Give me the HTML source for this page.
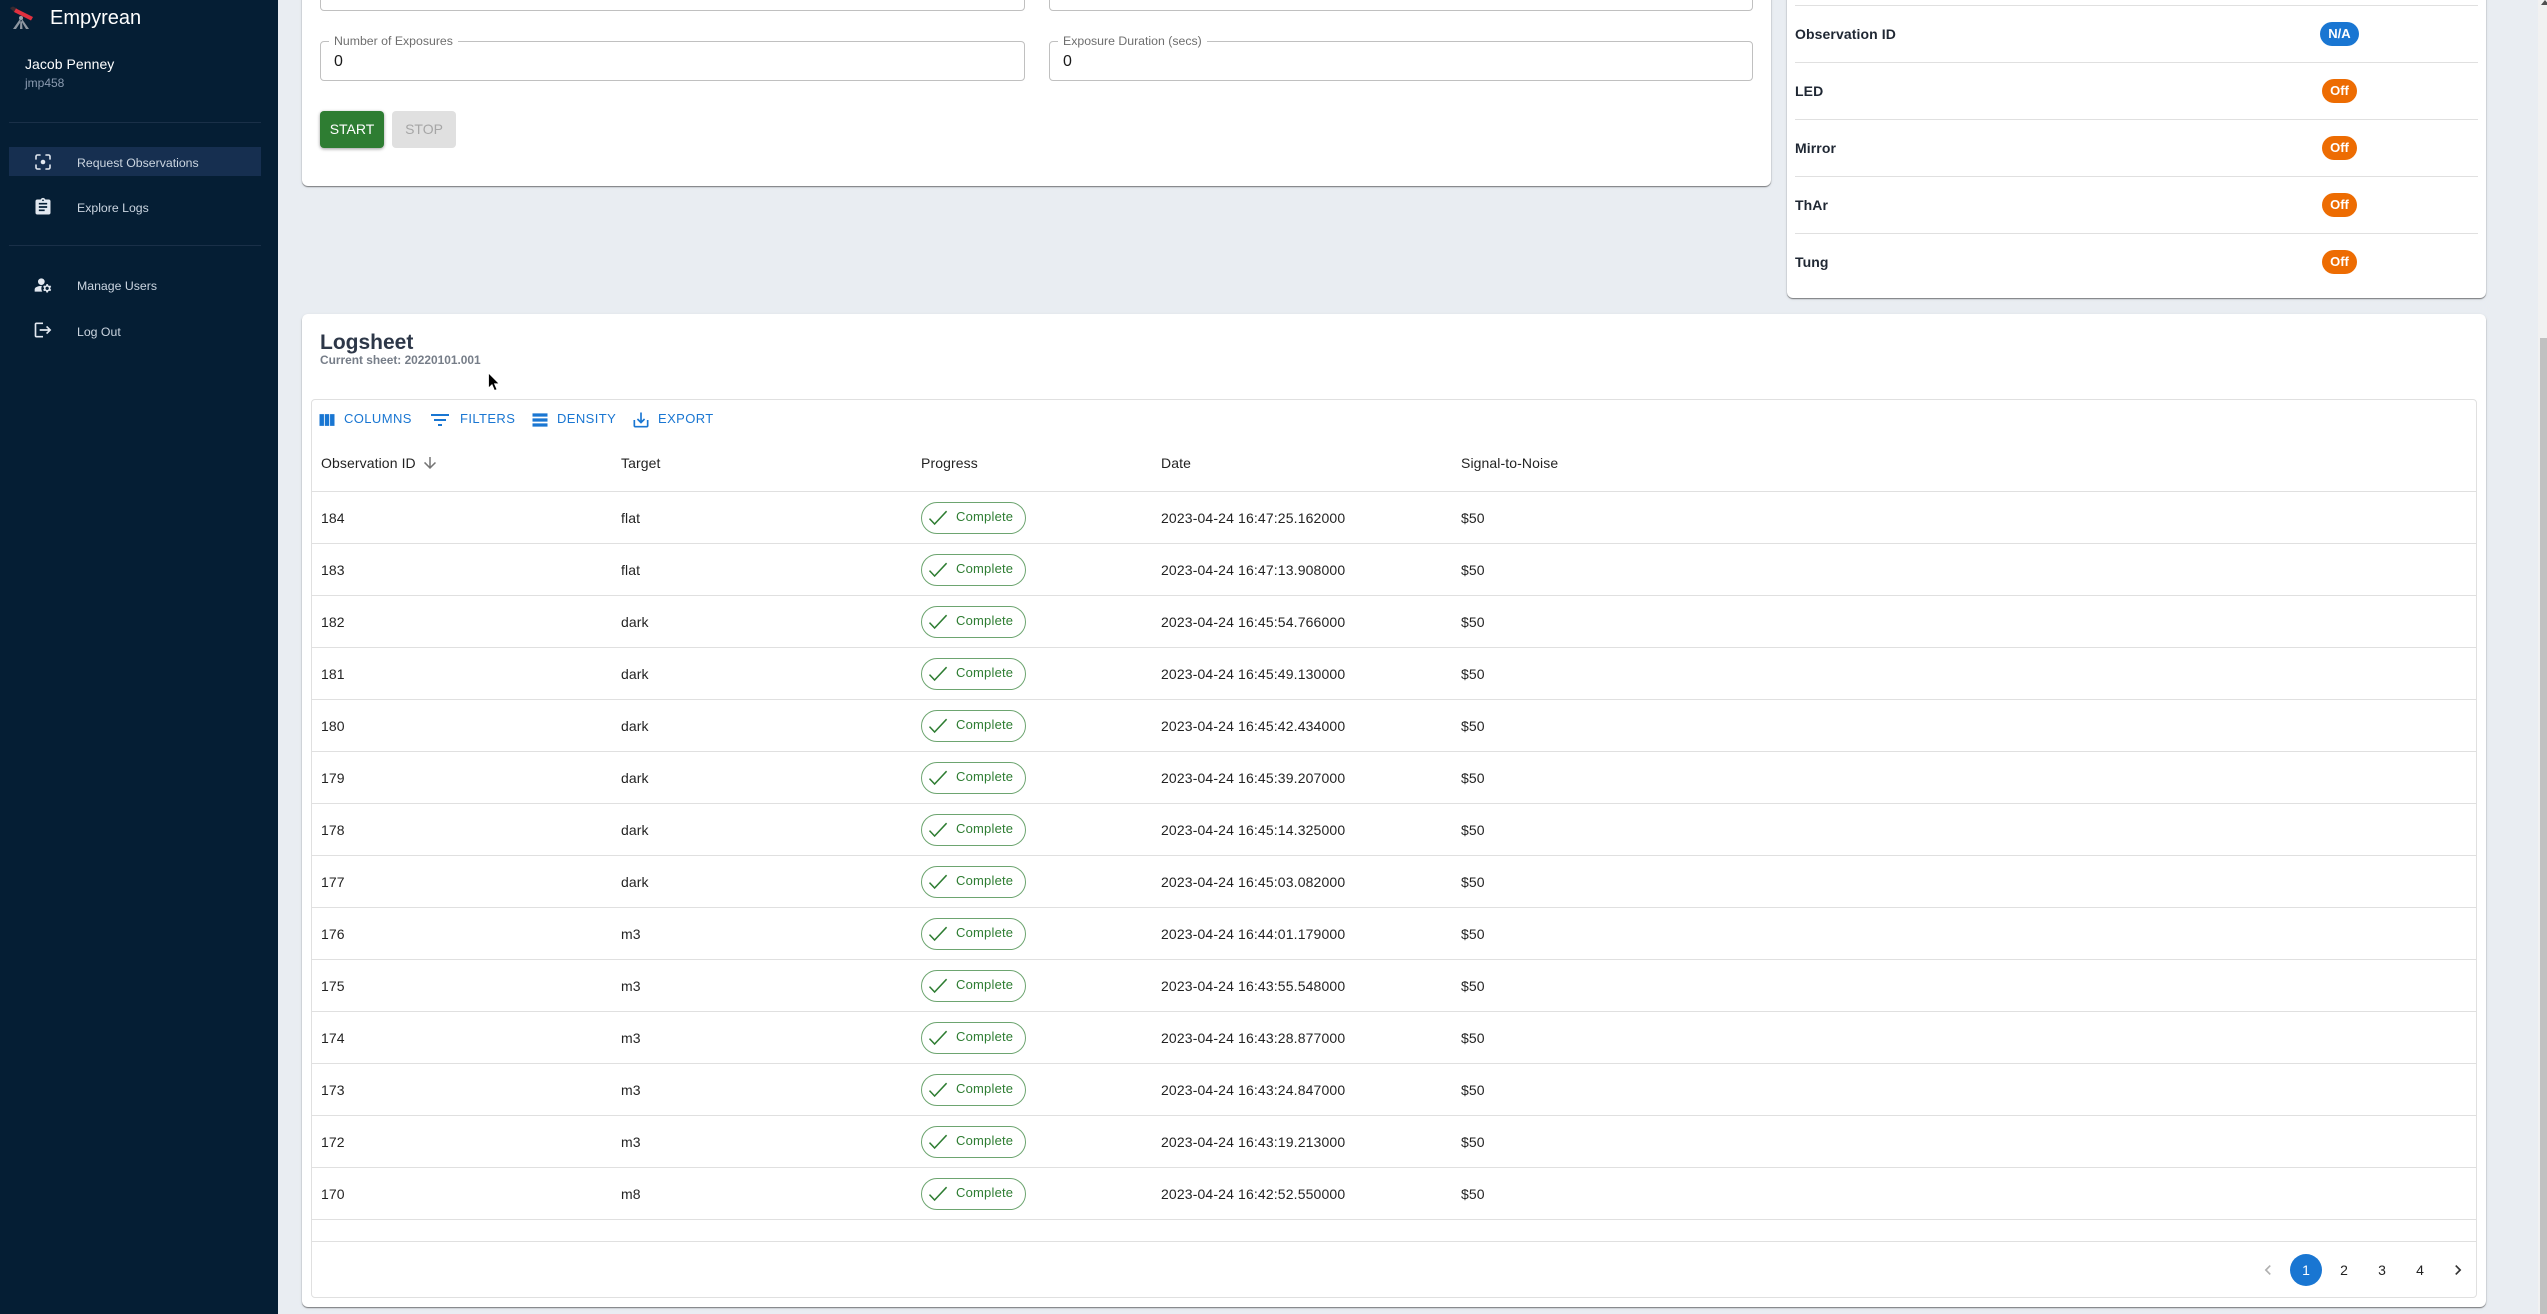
<!DOCTYPE html>
<html lang="en">
<head>
<meta charset="utf-8">
<title>Empyrean</title>
<style>
*{box-sizing:border-box}
html,body{margin:0;padding:0;width:2547px;height:1314px;overflow:hidden;background:#e9edf2;font-family:"Liberation Sans",sans-serif;color:rgba(0,0,0,.87)}
.a{position:absolute;white-space:nowrap}
svg{display:block}
#side{position:absolute;left:0;top:0;width:278px;height:1314px;background:#051e34}
.nav{position:absolute;left:77px;font-size:12.3px;line-height:20px;color:#cbd5e0}
.div{position:absolute;left:9px;width:252px;height:1px;background:#1a3048}
.card{position:absolute;background:#fff;border-radius:6px;box-shadow:0 1px 1px rgba(0,0,0,.45),0 1px 3px rgba(0,0,0,.1)}
.inp{position:absolute;border:1px solid #c0c0c0;border-radius:4px;background:#fff}
.lab{position:absolute;font-size:12.3px;line-height:16px;color:#6e6e6e;background:#fff;padding:0 5.5px}
.val{position:absolute;font-size:16px;line-height:20px;color:#1a1a1a}
.rl{position:absolute;left:1795px;width:683px;height:1px;background:#e0e0e0}
.rt{position:absolute;left:1795px;font-size:14px;font-weight:700;line-height:20px;letter-spacing:.1px;color:#1f2733}
.cp{position:absolute;height:24px;border-radius:12px;color:#fff;font-size:13px;font-weight:700;line-height:24px;text-align:center}
.off{left:2322px;width:35px;background:#ed6c02}
.tb{position:absolute;top:409px;font-size:13px;line-height:20px;letter-spacing:.4px;color:#1976d2}
.th{position:absolute;top:453px;font-size:14px;line-height:20px;letter-spacing:.1px}
.row{position:absolute;left:312px;width:2164px;height:52px;border-bottom:1px solid #e0e0e0;font-size:14px;line-height:53px;letter-spacing:.1px}
.row span{position:absolute;top:0}
.c1{left:9px}.c2{left:309px}.c4{left:849px;letter-spacing:.14px}.c5{left:1149px}
.chip{position:absolute;left:609px;top:10px;width:105px;height:32px;border:1px solid #6da570;border-radius:16px;background:#fff;line-height:16px}
.chip b{position:absolute;left:34px;top:6px;font-weight:400;font-size:13px;line-height:16px;letter-spacing:.2px;color:#2e7d32}
.chip svg{position:absolute;left:6px;top:7px}
.pg{position:absolute;top:1254px;width:32px;height:32px;font-size:14px;line-height:32px;text-align:center}
</style>
</head>
<body>
<svg width="0" height="0" style="position:absolute"><defs>
<symbol id="ck" viewBox="0 0 20 16"><path d="M1.5 8.6 6.6 14 18.6 1.2" fill="none" stroke="#2e7d32" stroke-width="1.5"/></symbol>
</defs></svg>

<div id="side">
  <svg class="a" style="left:8px;top:4px" width="28" height="27" viewBox="0 0 28 27">
    <path d="M2 4 L5 2.500 L9 4.500 L6 8Z" fill="#3a2a30"/>
    <path d="M8 4.500 L25 13 L23 16.500 L6 8Z" fill="#e0303f"/>
    <circle cx="13" cy="14" r="2" fill="#9aa3ad"/>
    <path d="M12 15 L5 25 L8 25 L13 17.500Z M12.300 17.500 H14 L14.500 25 H12Z M14 15 L21 25 L18 25 L13.500 17.500Z" fill="#8d96a0"/>
  </svg>
  <div class="a" style="left:50px;top:6px;font-size:20px;line-height:24px;color:#fff">Empyrean</div>
  <div class="a" style="left:25px;top:54px;font-size:14px;line-height:20px;letter-spacing:.05px;color:#fff">Jacob Penney</div>
  <div class="a" style="left:25px;top:75px;font-size:12px;line-height:16px;color:#8b9bb0">jmp458</div>
  <div class="div" style="top:122px"></div>
  <div class="a" style="left:9px;top:147px;width:252px;height:29px;background:#162f50"></div>
  <svg class="a" style="left:35px;top:154px" width="16" height="16" viewBox="0 0 16 16" fill="none" stroke="#e2e8f0" stroke-width="1.6" stroke-linecap="round">
    <path d="M1 5V2.500A1.500 1.500 0 0 1 2.500 1H5M11 1h2.500A1.500 1.500 0 0 1 15 2.500V5M15 11v2.500a1.500 1.500 0 0 1-1.500 1.500H11M5 15H2.500A1.500 1.500 0 0 1 1 13.500V11"/>
    <circle cx="8" cy="8" r="2.300" fill="#e2e8f0" stroke="none"/>
  </svg>
  <div class="nav" style="top:153px">Request Observations</div>
  <svg class="a" style="left:33px;top:197px" width="20" height="20" viewBox="0 0 24 24" fill="#e2e8f0"><path d="M19 3h-4.180C14.400 1.840 13.300 1 12 1c-1.300 0-2.400.84-2.820 2H5c-1.100 0-2 .9-2 2v14c0 1.100.9 2 2 2h14c1.100 0 2-.9 2-2V5c0-1.100-.9-2-2-2zm-7 0c.55 0 1 .45 1 1s-.45 1-1 1-1-.45-1-1 .45-1 1-1zm2 14H7v-2h7v2zm3-4H7v-2h10v2zm0-4H7V7h10v2z"/></svg>
  <div class="nav" style="top:198px">Explore Logs</div>
  <div class="div" style="top:245px"></div>
  <svg class="a" style="left:33px;top:275px" width="20" height="20" viewBox="0 0 24 24" fill="#e2e8f0"><circle cx="10" cy="8" r="4"/><path d="M10.670 13.020c-.22-.01-.44-.02-.67-.02-2.420 0-4.680.67-6.610 1.820-.88.52-1.390 1.500-1.390 2.530V20h9.260c-.79-1.130-1.260-2.510-1.260-4 0-1.070.25-2.070.67-2.980z"/><path d="M20.750 16c0-.22-.03-.42-.06-.63l1.140-1.010-1-1.730-1.450.49c-.32-.27-.68-.48-1.080-.63L18 11h-2l-.3 1.490c-.4.15-.76.36-1.080.63l-1.450-.49-1 1.730 1.140 1.010c-.03.21-.06.41-.06.63s.03.42.06.63l-1.140 1.010 1 1.730 1.450-.49c.32.27.68.48 1.080.63L16 21h2l.3-1.490c.4-.15.76-.36 1.080-.63l1.450.49 1-1.730-1.140-1.010c.03-.21.06-.41.06-.63zM17 18c-1.100 0-2-.9-2-2s.9-2 2-2 2 .9 2 2-.9 2-2 2z"/></svg>
  <div class="nav" style="top:276px">Manage Users</div>
  <svg class="a" style="left:33px;top:320px" width="20" height="20" viewBox="0 0 24 24" fill="#e2e8f0"><path d="M17 7l-1.410 1.410L18.170 11H8v2h10.170l-2.580 2.580L17 17l5-5zM4 5h8V3H4c-1.100 0-2 .9-2 2v14c0 1.100.9 2 2 2h8v-2H4V5z"/></svg>
  <div class="nav" style="top:322px">Log Out</div>
</div>

<div class="a" style="left:2538px;top:0;width:9px;height:1314px;background:#f1f1f1"></div>
<div class="a" style="left:2540px;top:338px;width:7px;height:976px;background:#c1c1c1"></div>
<svg class="a" style="left:2541px;top:0" width="6" height="5" viewBox="0 0 6 5"><path d="M4 0 L8 5 H0Z" fill="#505050"/></svg>

<div class="card" style="left:302px;top:-40px;width:1469px;height:226px"></div>
<div class="inp" style="left:320px;top:-30px;width:705px;height:41px"></div>
<div class="inp" style="left:1049px;top:-30px;width:704px;height:41px"></div>
<div class="inp" style="left:320px;top:41px;width:705px;height:40px"></div>
<div class="inp" style="left:1049px;top:41px;width:704px;height:40px"></div>
<div class="lab" style="left:328.500px;top:33px">Number of Exposures</div>
<div class="lab" style="left:1057.500px;top:33px">Exposure Duration (secs)</div>
<div class="val" style="left:334px;top:52px">0</div>
<div class="val" style="left:1063px;top:52px">0</div>
<div class="a" style="left:320px;top:111px;width:64px;height:37px;background:#2e7d32;border-radius:4px;color:#fff;font-size:14px;line-height:36px;text-align:center;box-shadow:0 1px 3px rgba(0,0,0,.4)">START</div>
<div class="a" style="left:392px;top:111px;width:64px;height:37px;background:#e0e0e0;border-radius:4px;color:#a6a6a6;font-size:14px;line-height:36px;text-align:center">STOP</div>

<div class="card" style="left:1787px;top:-40px;width:699px;height:338px"></div>
<div class="rl" style="top:5px"></div>
<div class="rl" style="top:62px"></div>
<div class="rl" style="top:119px"></div>
<div class="rl" style="top:176px"></div>
<div class="rl" style="top:233px"></div>
<div class="rt" style="top:24px">Observation ID</div>
<div class="rt" style="top:81px">LED</div>
<div class="rt" style="top:138px">Mirror</div>
<div class="rt" style="top:195px">ThAr</div>
<div class="rt" style="top:252px">Tung</div>
<div class="cp" style="left:2320px;top:22px;width:39px;background:#1976d2">N/A</div>
<div class="cp off" style="top:79px">Off</div>
<div class="cp off" style="top:136px">Off</div>
<div class="cp off" style="top:193px">Off</div>
<div class="cp off" style="top:250px">Off</div>

<div class="card" style="left:302px;top:314px;width:2184px;height:993px"></div>
<div class="a" style="left:320px;top:331px;font-size:21px;font-weight:700;line-height:24px;color:#2d3748">Logsheet</div>
<div class="a" style="left:320px;top:352px;font-size:11.9px;font-weight:700;line-height:16px;color:#767d88">Current sheet: 20220101.001</div>
<div class="a" style="left:311px;top:399px;width:2166px;height:899px;border:1px solid #e0e0e0;border-radius:4px"></div>

<svg class="a" style="left:317px;top:410px" width="20" height="20" viewBox="0 0 24 24" fill="#1976d2"><path d="M14.670 5v14H9.330V5h5.340zm1 14H21V5h-5.330v14zm-7.340 0V5H3v14h5.330z"/></svg>
<div class="tb" style="left:344px">COLUMNS</div>
<svg class="a" style="left:428px;top:408px" width="24" height="24" viewBox="0 0 24 24" fill="#1976d2"><path d="M10 18h4v-2h-4v2zM3 6v2h18V6H3zm3 7h12v-2H6v2z"/></svg>
<div class="tb" style="left:460px">FILTERS</div>
<svg class="a" style="left:530px;top:410px" width="20" height="20" viewBox="0 0 24 24" fill="#1976d2"><path d="M21 8H3V4h18V8zM21 10H3v4h18V10zM21 16H3v4h18V16z"/></svg>
<div class="tb" style="left:557px">DENSITY</div>
<svg class="a" style="left:631px;top:410px" width="20" height="20" viewBox="0 0 24 24" fill="#1976d2"><path d="M19 12v7H5v-7H3v7c0 1.100.9 2 2 2h14c1.100 0 2-.9 2-2v-7h-2zm-6 .67l2.590-2.580L17 11.500l-5 5-5-5 1.410-1.410L11 12.670V3h2z"/></svg>
<div class="tb" style="left:658px">EXPORT</div>

<div class="th" style="left:321px">Observation ID</div>
<svg class="a" style="left:421px;top:454px" width="18" height="18" viewBox="0 0 24 24" fill="#757575"><path d="M20 12l-1.410-1.410L13 16.170V4h-2v12.170l-5.580-5.590L4 12l8 8 8-8z"/></svg>
<div class="th" style="left:621px">Target</div>
<div class="th" style="left:921px">Progress</div>
<div class="th" style="left:1161px">Date</div>
<div class="th" style="left:1461px">Signal-to-Noise</div>
<div class="a" style="left:312px;top:491px;width:2164px;height:1px;background:#e0e0e0"></div>

<div class="row" style="top:492px"><span class="c1">184</span><span class="c2">flat</span><div class="chip"><svg width="20" height="16"><use href="#ck"/></svg><b>Complete</b></div><span class="c4">2023-04-24 16:47:25.162000</span><span class="c5">$50</span></div>
<div class="row" style="top:544px"><span class="c1">183</span><span class="c2">flat</span><div class="chip"><svg width="20" height="16"><use href="#ck"/></svg><b>Complete</b></div><span class="c4">2023-04-24 16:47:13.908000</span><span class="c5">$50</span></div>
<div class="row" style="top:596px"><span class="c1">182</span><span class="c2">dark</span><div class="chip"><svg width="20" height="16"><use href="#ck"/></svg><b>Complete</b></div><span class="c4">2023-04-24 16:45:54.766000</span><span class="c5">$50</span></div>
<div class="row" style="top:648px"><span class="c1">181</span><span class="c2">dark</span><div class="chip"><svg width="20" height="16"><use href="#ck"/></svg><b>Complete</b></div><span class="c4">2023-04-24 16:45:49.130000</span><span class="c5">$50</span></div>
<div class="row" style="top:700px"><span class="c1">180</span><span class="c2">dark</span><div class="chip"><svg width="20" height="16"><use href="#ck"/></svg><b>Complete</b></div><span class="c4">2023-04-24 16:45:42.434000</span><span class="c5">$50</span></div>
<div class="row" style="top:752px"><span class="c1">179</span><span class="c2">dark</span><div class="chip"><svg width="20" height="16"><use href="#ck"/></svg><b>Complete</b></div><span class="c4">2023-04-24 16:45:39.207000</span><span class="c5">$50</span></div>
<div class="row" style="top:804px"><span class="c1">178</span><span class="c2">dark</span><div class="chip"><svg width="20" height="16"><use href="#ck"/></svg><b>Complete</b></div><span class="c4">2023-04-24 16:45:14.325000</span><span class="c5">$50</span></div>
<div class="row" style="top:856px"><span class="c1">177</span><span class="c2">dark</span><div class="chip"><svg width="20" height="16"><use href="#ck"/></svg><b>Complete</b></div><span class="c4">2023-04-24 16:45:03.082000</span><span class="c5">$50</span></div>
<div class="row" style="top:908px"><span class="c1">176</span><span class="c2">m3</span><div class="chip"><svg width="20" height="16"><use href="#ck"/></svg><b>Complete</b></div><span class="c4">2023-04-24 16:44:01.179000</span><span class="c5">$50</span></div>
<div class="row" style="top:960px"><span class="c1">175</span><span class="c2">m3</span><div class="chip"><svg width="20" height="16"><use href="#ck"/></svg><b>Complete</b></div><span class="c4">2023-04-24 16:43:55.548000</span><span class="c5">$50</span></div>
<div class="row" style="top:1012px"><span class="c1">174</span><span class="c2">m3</span><div class="chip"><svg width="20" height="16"><use href="#ck"/></svg><b>Complete</b></div><span class="c4">2023-04-24 16:43:28.877000</span><span class="c5">$50</span></div>
<div class="row" style="top:1064px"><span class="c1">173</span><span class="c2">m3</span><div class="chip"><svg width="20" height="16"><use href="#ck"/></svg><b>Complete</b></div><span class="c4">2023-04-24 16:43:24.847000</span><span class="c5">$50</span></div>
<div class="row" style="top:1116px"><span class="c1">172</span><span class="c2">m3</span><div class="chip"><svg width="20" height="16"><use href="#ck"/></svg><b>Complete</b></div><span class="c4">2023-04-24 16:43:19.213000</span><span class="c5">$50</span></div>
<div class="row" style="top:1168px"><span class="c1">170</span><span class="c2">m8</span><div class="chip"><svg width="20" height="16"><use href="#ck"/></svg><b>Complete</b></div><span class="c4">2023-04-24 16:42:52.550000</span><span class="c5">$50</span></div>
<div class="a" style="left:312px;top:1241px;width:2164px;height:1px;background:#e0e0e0"></div>

<svg class="a" style="left:2258px;top:1260px" width="20" height="20" viewBox="0 0 24 24" fill="#b0b0b0"><path d="M15.410 7.410 14 6l-6 6 6 6 1.410-1.410L10.830 12z"/></svg>
<div class="pg" style="left:2290px;background:#1976d2;border-radius:50%;color:#fff">1</div>
<div class="pg" style="left:2328px">2</div>
<div class="pg" style="left:2366px">3</div>
<div class="pg" style="left:2404px">4</div>
<svg class="a" style="left:2448px;top:1260px" width="20" height="20" viewBox="0 0 24 24" fill="#333"><path d="M10 6 8.590 7.410 13.170 12l-4.580 4.590L10 18l6-6z"/></svg>

<svg class="a" style="left:487px;top:372px" width="14" height="20" viewBox="0 0 14 20"><path d="M1.500 1v15l3.500-3.300 2.500 5.800 2.500-1-2.500-5.700h4.800z" fill="#000" stroke="#fff" stroke-width=".8"/></svg>
</body>
</html>
